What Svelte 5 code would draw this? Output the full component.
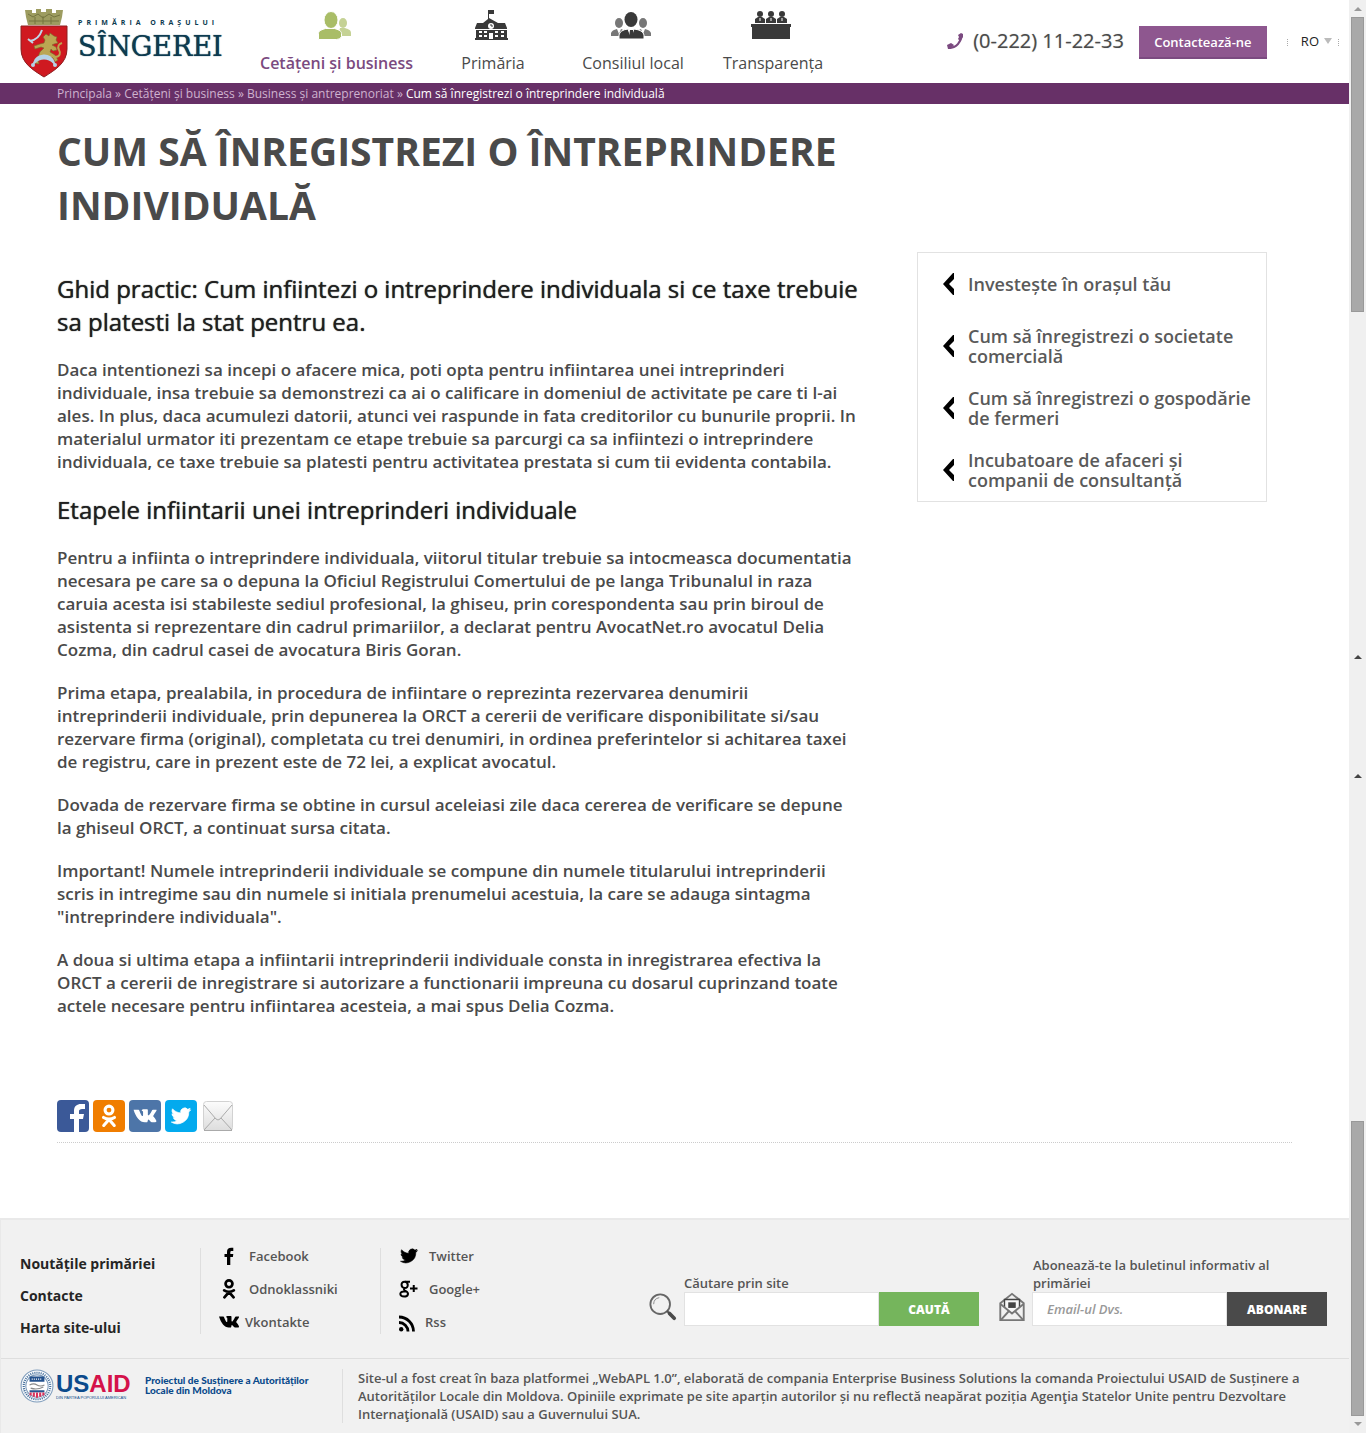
<script>
  const nav = [
    { label: 'Cetățeni și business', icon: 'people', active: true },
    { label: 'Primăria', icon: 'hall' },
    { label: 'Consiliul local', icon: 'council' },
    { label: 'Transparența', icon: 'panel' }
  ];
  const crumbs = ['Principala', 'Cetățeni și business', 'Business și antreprenoriat'];
  const related = [
    'Investește în orașul tău',
    'Cum să înregistrezi o societate comercială',
    'Cum să înregistrezi o gospodărie de fermeri',
    'Incubatoare de afaceri și companii de consultanță'
  ];
  const steps = [
    'Pentru a infiinta o intreprindere individuala, viitorul titular trebuie sa intocmeasca documentatia necesara pe care sa o depuna la Oficiul Registrului Comertului de pe langa Tribunalul in raza caruia acesta isi stabileste sediul profesional, la ghiseu, prin corespondenta sau prin biroul de asistenta si reprezentare din cadrul primariilor, a declarat pentru AvocatNet.ro avocatul Delia Cozma, din cadrul casei de avocatura Biris Goran.',
    'Prima etapa, prealabila, in procedura de infiintare o reprezinta rezervarea denumirii intreprinderii individuale, prin depunerea la ORCT a cererii de verificare disponibilitate si/sau rezervare firma (original), completata cu trei denumiri, in ordinea preferintelor si achitarea taxei de registru, care in prezent este de 72 lei, a explicat avocatul.',
    'Dovada de rezervare firma se obtine in cursul aceleiasi zile daca cererea de verificare se depune la ghiseul ORCT, a continuat sursa citata.',
    'Important! Numele intreprinderii individuale se compune din numele titularului intreprinderii scris in intregime sau din numele si initiala prenumelui acestuia, la care se adauga sintagma "intreprindere individuala".',
    'A doua si ultima etapa a infiintarii intreprinderii individuale consta in inregistrarea efectiva la ORCT a cererii de inregistrare si autorizare a functionarii impreuna cu dosarul cuprinzand toate actele necesare pentru infiintarea acesteia, a mai spus Delia Cozma.'
  ];
  const shares = ['facebook', 'odnoklassniki', 'vkontakte', 'twitter', 'mail'];
  const socials = [
    [['facebook', 'Facebook'], ['odnoklassniki', 'Odnoklassniki'], ['vkontakte', 'Vkontakte']],
    [['twitter', 'Twitter'], ['google', 'Google+'], ['rss', 'Rss']]
  ];
  let query = $state('');
  let email = $state('');
</script>

{#snippet glyph(name)}
  {#if name === 'facebook'}
    <path d="M8 19v-8H5.500V8H8V6c0-2.800 1.500-4.200 4.300-4.200h2V5h-1.600C11.500 5 11.300 5.600 11.300 6.500V8h3l-.4 3h-2.600v8z" />
  {:else if name === 'odnoklassniki'}
    <path fill-rule="evenodd" d="M10 0a4.800 4.800 0 1 1 0 9.600A4.800 4.800 0 0 1 10 0zm0 2.700a2.100 2.100 0 1 0 0 4.200 2.100 2.100 0 0 0 0-4.200z" />
    <path d="M5.200 11.300Q10 14.200 14.800 11.300M10 13l-4.600 5.300M10 13l4.600 5.300" fill="none" stroke="currentColor" stroke-width="2.700" stroke-linecap="round" />
  {:else if name === 'vkontakte'}
    <path d="M0 4.500h4.200c.5 0 .7.300.9.800.6 1.700 2 4.800 2.700 4.800.4 0 .5-.4.500-1.500V6.500c0-1.200-1.200-.9-1.200-1.400C7.200 4.300 8 4 9.200 4h2.300c.8 0 1 .4 1 1.200v3.600c0 .8.6.9 1.300.1 1-1.200 1.700-2.500 2.200-3.600.2-.5.5-.8 1-.8h2.700c.6 0 .5.500.2 1.100-.7 1.400-2.700 3.800-2.700 4.400 0 .7 3 3.200 2.800 4.700-.1.800-.9.800-1.500.8h-2.600c-1.300 0-2-2.400-3-2.400-.6 0-.3 2-1 2.300-.4.200-1.100.1-2.100.1C5.500 15.500 2 11 0 4.500z" />
  {:else if name === 'twitter'}
    <path d="M18.500 4.600c-.6.300-1.300.5-2 .6.700-.4 1.200-1.100 1.500-1.900-.7.400-1.400.7-2.200.8A3.500 3.500 0 0 0 9.800 7.300C6.900 7.200 4.300 5.800 2.600 3.700c-.9 1.600-.5 3.600 1.100 4.700-.6 0-1.100-.2-1.600-.4 0 1.700 1.200 3.100 2.800 3.400-.5.200-1 .2-1.600.1.500 1.400 1.700 2.400 3.300 2.400A7 7 0 0 1 1.500 15.300 10 10 0 0 0 16.800 6.400c.7-.5 1.300-1.100 1.700-1.800z" stroke="currentColor" stroke-width=".6" />
  {:else if name === 'google'}
    <path d="M6 2.700H11M5.500 2.700C1.500 2.700 1.500 9 5.800 9S9.500 2.700 5.500 2.700zM6 9c-2 1.200-1 2 .8 3 3.800 2.200 2.200 5.500-1.600 5.500-5 0-5.200-5-.4-5H7" fill="none" stroke="currentColor" stroke-width="2" />
    <path d="M11 9.500h7.500M14.750 6v7" fill="none" stroke="currentColor" stroke-width="2" />
  {:else if name === 'rss'}
    <circle cx="2.200" cy="17.300" r="2.200" />
    <path d="M0 10.500a9 9 0 0 1 9 9M0 5A14.500 14.500 0 0 1 14.500 19.500" fill="none" stroke="currentColor" stroke-width="2.800" />
  {/if}
{/snippet}

<div class="window">
  <div class="page">
    <header>
      <a class="brand" href="#top" aria-label="Primăria orașului Sîngerei">
        <svg class="crest" viewBox="0 0 48 70" aria-hidden="true">
          <path d="M5 2h7v3h4V1h5v3h5V1h6v4h4V2h7l-1 7-2 8H8L6 9z" fill="#9d9c60" />
          <path d="M8 6l5 3 5-3 5 4 6-4 5 3 6-2M9 13h30M15 9v7M23 8v8M31 9v7" stroke="#74753e" fill="none" />
          <path d="M1 18h46v23c0 14-12 21-23 28C13 62 1 55 1 41z" fill="#cf1920" stroke="#8d2021" />
          <path d="M26 26l3 2 1-3 4 3 3 1-1 3 2 3-4 1-2 1 4 2 1 3-4 1-2-2-1 3 5 3 3 5-3 2-2-4-6-2-5 3-4 1 1 4-5-1 1-4 3-2 2-5 4-4-3-1-6 2-1-3 6-2 4-1 1-3-2-3z" fill="#bba652" stroke="#776c2d" stroke-width=".6" />
          <path d="M35 49c5 0 6-4 4-7-2-4 0-6 3-7" fill="none" stroke="#bba652" stroke-width="2" />
          <path d="M10 33c6-1 10-5 12-11M8 31l5 4" fill="none" stroke="#bfd8e8" stroke-width="2" />
          <path d="M14 55c2-9 17-11 20 0-6-6-14-6-20 0z" fill="#b6d2e5" stroke="#b6d2e5" stroke-width="2" />
          <circle cx="13" cy="57" r="2" fill="#b6d2e5" /><circle cx="35" cy="57" r="2" fill="#b6d2e5" />
        </svg>
        <span class="brand-text"><small>PRIMĂRIA ORAȘULUI</small><strong>SÎNGEREI</strong></span>
      </a>

      <nav>
        {#each nav as item}
          <a href="#{item.icon}" class:active={item.active}>
            <svg viewBox="0 0 44 32" aria-hidden="true">
              {#if item.icon === 'people'}
                <g fill="#c5d295"><ellipse cx="31" cy="13" rx="4" ry="5" /><path d="M26 26h13v-3c0-3-3-4-6-5h-5z" /></g>
                <g fill="#a9bd67" stroke="#fff" stroke-width="1"><path d="M6.500 29.500v-6c0-3 4-4 7-5h9c3 1 7 2 7 5v3q-1 3-5 3z" /><ellipse cx="19" cy="10" rx="7" ry="8.500" /></g>
              {:else if item.icon === 'hall'}
                <g fill="#393939"><path d="M20 0h6v4h-5v4l9 5h7l2 5v1H7v-1l2-5h6l5-4zM8 20h31v10H8zM7 28h33v2H7z" /></g>
                <circle cx="23" cy="16" r="3" fill="#fff" /><path d="M23 14v2h2" stroke="#393939" fill="none" />
                <path d="M11 21h3v2h-3zM16 21h3v2h-3zM27 21h3v2h-3zM33 21h3v2h-3zM11 25h3v2h-3zM16 25h3v2h-3zM27 25h3v2h-3zM33 25h3v2h-3zM21 23h4v6h-4z" fill="#fff" />
              {:else if item.icon === 'council'}
                <g fill="#777"><ellipse cx="11" cy="13" rx="4" ry="5" /><ellipse cx="35" cy="13" rx="4" ry="5" /><path d="M3 26v-3q1-3 6-4l2 5 2-5q4 1 5 7zM29 26l2-6 2-1 2 5 2-5q5 1 6 4v3z" /></g>
                <g fill="#393939"><path d="M11 29v-4q1-5 9-6l3 8 3-8q9 1 10 6v4z" stroke="#fff" /><ellipse cx="23" cy="9.500" rx="6.500" ry="7.500" /><path d="M22 20h3l1 8h-5z" /></g>
              {:else}
                <g fill="#393939"><circle cx="12" cy="4" r="3" /><circle cx="23" cy="4" r="3" /><circle cx="34" cy="4" r="3" /><path d="M7 13V9l3-2h4l3 2v4zM18 13V9l3-2h4l3 2v4zM29 13V9l3-2h4l3 2v4zM3 14h40v3h-1v12H4V17H3z" /></g>
                <path d="M12 8v3M23 8v3M34 8v3" stroke="#fff" />
              {/if}
            </svg>
            <span>{item.label}</span>
          </a>
        {/each}
      </nav>

      <div class="contact">
        <svg class="phone" viewBox="0 0 16 16" aria-hidden="true"><path d="M1.500 14.500Q7 15.500 11 11t3.500-9.500" fill="none" stroke="#7b4a80" stroke-width="2" /><path d="M0 12l4-2 3 2-3 4H1zM11 2l3-2 2 1v3l-3 4-2-2 1-2z" fill="#7b4a80" /></svg>
        <a class="number" href="tel:0222112233">(0-222) 11-22-33</a>
        <button class="cta" type="button">Contactează-ne</button>
        <button class="lang" type="button">RO <i></i></button>
      </div>
    </header>

    <div class="crumbs">
      {#each crumbs as c}<a href="#{c}">{c}</a>{' » '}{/each}<b>Cum să înregistrezi o întreprindere individuală</b>
    </div>

    <main>
      <h1>Cum să înregistrezi o întreprindere individuală</h1>
      <article>
        <h2>Ghid practic: Cum infiintezi o intreprindere individuala si ce taxe trebuie sa platesti la stat pentru ea.</h2>
        <p>Daca intentionezi sa incepi o afacere mica, poti opta pentru infiintarea unei intreprinderi individuale, insa trebuie sa demonstrezi ca ai o calificare in domeniul de activitate pe care ti l-ai ales. In plus, daca acumulezi datorii, atunci vei raspunde in fata creditorilor cu bunurile proprii. In materialul urmator iti prezentam ce etape trebuie sa parcurgi ca sa infiintezi o intreprindere individuala, ce taxe trebuie sa platesti pentru activitatea prestata si cum tii evidenta contabila.</p>
        <h2>Etapele infiintarii unei intreprinderi individuale</h2>
        {#each steps as text}<p>{text}</p>{/each}
      </article>
      <aside>
        {#each related as text}
          <a href="#related">
            <svg viewBox="0 0 12 22" aria-hidden="true"><path d="M11 0v6L6 11l5 5v6h-1L0 11 10 0z" /></svg>
            <span>{text}</span>
          </a>
        {/each}
      </aside>
      <div class="share">
        {#each shares as s}
          <a class={s} href="#{s}" aria-label={s}>
            {#if s === 'mail'}
              <svg viewBox="0 0 32 32"><defs><linearGradient id="paper" x2="0" y2="1"><stop stop-color="#fcfcfc" /><stop offset="1" stop-color="#ddd" /></linearGradient></defs><rect x="1.500" y="1.500" width="29" height="29" rx="3" fill="url(#paper)" stroke="#d2d2d2" /><path d="M2 30l11-12M30 30L19 18M2 5l12 14q2 2 4 0L30 5M2 30.500h28" fill="none" stroke="#aaa" /></svg>
            {:else if s === 'facebook'}
              <svg viewBox="0 0 32 32"><path fill="currentColor" d="M17 32V19h-4v-5h4v-3c0-5 3-7 7-7h4v5h-3c-2 0-3 1-3 2v3h5l-1 5h-4v13z" /></svg>
            {:else}
              <svg viewBox="-4 -4 28 28" fill="currentColor">{@render glyph(s)}</svg>
            {/if}
          </a>
        {/each}
      </div>
    </main>

    <footer>
      <div class="top">
        <div class="links">
          <a href="#news">Noutățile primăriei</a>
          <a href="#contact">Contacte</a>
          <a href="#map">Harta site-ului</a>
        </div>
        {#each socials as group}
          <div class="social">
            {#each group as [icon, label]}
              <a href="#{icon}" class:tight={icon === 'vkontakte' || icon === 'rss'}><svg viewBox="0 0 20 20" fill="currentColor" aria-hidden="true">{@render glyph(icon)}</svg>{label}</a>
            {/each}
          </div>
        {/each}
        <form class="search" onsubmit={(e) => e.preventDefault()}>
          <svg viewBox="0 0 30 30" aria-hidden="true"><circle cx="12" cy="12" r="10.500" fill="none" stroke="#666" stroke-width="2" /><path d="M5 12q0-6 6-7" fill="none" stroke="#888" /><path d="M19 19l3 3" stroke="#555" stroke-width="2" /><path d="M22 22l5 5" stroke="#4a4a4a" stroke-width="4" stroke-linecap="round" /></svg>
          <label for="q">Căutare prin site</label>
          <div class="field"><input id="q" type="text" bind:value={query} /><button type="submit">CAUTĂ</button></div>
        </form>
        <form class="subscribe" onsubmit={(e) => e.preventDefault()}>
          <svg viewBox="0 0 28 32" aria-hidden="true"><path d="M1.500 12L14 2l12.500 10v18h-25z" fill="#f1f1f1" stroke="#777" stroke-width="2" /><path d="M6 8h16v8l-8 7-8-7z" fill="#f7f7f7" /><path d="M6 16V8h16v8" fill="none" stroke="#444" stroke-width="1.500" /><path d="M10 11h8v6h-8z" fill="#444" /><path d="M2 13l12 10 12-10M2 30l9-10M26 30l-9-10" fill="none" stroke="#777" stroke-width="2" /></svg>
          <label for="mail">Abonează-te la buletinul informativ al primăriei</label>
          <div class="field"><input id="mail" type="email" placeholder="Email-ul Dvs." bind:value={email} /><button type="submit">ABONARE</button></div>
        </form>
      </div>
      <div class="bottom">
        <a class="usaid" href="#usaid">
          <svg viewBox="0 0 32 32" aria-hidden="true"><circle cx="16" cy="16" r="15" fill="#f8fafc" stroke="#7f9cbb" /><circle cx="16" cy="16" r="12.500" fill="none" stroke="#46709d" stroke-width="2" stroke-dasharray="1 1" /><circle cx="16" cy="16" r="10.500" fill="#fff" stroke="#7f9cbb" /><path d="M9 7h14v5H9z" fill="#24528e" /><path d="M11 9.500h10" stroke="#fff" stroke-dasharray="1 1" /><path d="M9 15q4-2 7 0t7 0M10 18q6 2 12-1" stroke="#888" fill="none" /><path d="M9 20h14v2H9z" fill="#24528e" /><path d="M10 22v3M13 22v4M16 22v5M19 22v4M22 22v3" stroke="#d9315a" stroke-width="2" /></svg>
          <span class="mark"><strong>US<em>AID</em></strong><small>DIN PARTEA POPORULUI AMERICAN</small></span>
          <span class="project">Proiectul de Susținere a Autorităților<br />Locale din Moldova</span>
        </a>
        <p>Site-ul a fost creat în baza platformei „WebAPL 1.0”, elaborată de compania Enterprise Business Solutions la comanda Proiectului USAID de Susținere a Autorităților Locale din Moldova. Opiniile exprimate pe site aparțin autorilor și nu reflectă neapărat poziția Agenţia Statelor Unite pentru Dezvoltare Internaţională (USAID) sau a Guvernului SUA.</p>
      </div>
    </footer>
  </div>

  <div class="scroll" aria-hidden="true">
    <i class="arrow pale"></i><i class="thumb"></i>
    <span><i class="arrow"></i><i class="arrow"></i></span>
    <i class="thumb"></i><i class="arrow pale down"></i>
  </div>
</div>

<style>
  :global(body) { margin: 0; background: #fff; }
  .window { display: grid; grid-template-columns: minmax(0, 1fr) 17px; min-height: 100vh; font-family: "Open Sans", sans-serif; color: #4a4a4a; }
  .window :global(*) { box-sizing: border-box; }
  .page { display: flex; flex-direction: column; }
  a { color: inherit; text-decoration: none; }
  button, input { font-family: inherit; border: 0; border-radius: 0; margin: 0; }
  svg { display: block; flex: none; }

  header { display: flex; height: 83px; padding-left: 20px; }
  .brand { display: flex; align-items: flex-start; gap: 10px; width: 230px; padding-top: 8px; color: #0d3b50; }
  .crest { width: 48px; height: 70px; }
  .brand-text { display: flex; flex-direction: column; padding-top: 10px; white-space: nowrap; }
  .brand-text small { font: 700 7px/10px "Open Sans", sans-serif; letter-spacing: 4px; }
  .brand-text strong { font: 400 27px/38px "DejaVu Serif", serif; text-shadow: 0 0 1px currentColor; }
  nav { display: flex; }
  nav a { display: flex; flex-direction: column; align-items: center; min-width: 140px; padding: 10px 10px 0; font-size: 16px; line-height: 22px; }
  nav svg { width: 44px; height: 32px; margin: 0 6px 10px 0; }
  nav .active { font-weight: 600; color: #7b4a80; }
  .contact { display: flex; flex: 1; justify-content: flex-end; padding: 26px 10px 0 0; }
  .phone { width: 16px; height: 16px; margin: 7px 10px 0 0; }
  .number { font-size: 20px; line-height: 30px; margin-right: 15px; text-shadow: 0 0 1px #aaa; }
  .cta { width: 128px; height: 33px; padding: 0; margin-right: 20px; background: #8e578f; border-bottom: 2px solid #7b4a80; color: #fff; font-size: 13px; font-weight: 600; }
  .lang { display: flex; align-items: center; gap: 5px; height: 30px; padding: 0 7px 0 14px; background: repeating-linear-gradient(#aaa 0 1px, #fff 1px 2px) left 13px / 1px 7px no-repeat, repeating-linear-gradient(#aaa 0 1px, #fff 1px 2px) right 13px / 1px 7px no-repeat; color: #222; font-size: 13px; }
  .lang i { border: 4px solid transparent; border-top: 6px solid #bbb; border-bottom: 0; }

  .crumbs { background: #673067; color: #cfb3cf; height: 21px; padding: 0 57px; font-size: 12px; line-height: 21px; }
  .crumbs b { color: #fff; font-weight: 400; }

  main { display: grid; grid-template-columns: minmax(0, 1fr) 350px 25px; margin: 0 57px; padding-top: 20px; align-items: start; }
  h1 { margin: 0 0 20px; grid-column: 1; font-size: 39px; line-height: 54px; font-weight: 700; text-transform: uppercase; }
  article { grid-column: 1; padding: 0 56px 63px 0; }
  h2 { margin: 20px 0; font-size: 24px; line-height: 33px; font-weight: 400; color: #1f1f1f; text-shadow: 0 0 1px currentColor; }
  article p { margin: 0 0 20px; font-size: 17px; line-height: 23px; font-weight: 600; }
  aside { border: 1px solid #e2e2e2; color: #5a5a5a; }
  aside a { display: flex; align-items: center; gap: 13px; min-height: 62px; padding: 0 10px 0 25px; font-size: 18px; line-height: 20px; font-weight: 600; }
  aside svg { width: 12px; height: 22px; fill: #000; }
  .share { grid-column: 1 / -1; display: flex; gap: 4px; padding-bottom: 10px; border-bottom: 1px dotted #ccc; }
  .share a { width: 32px; height: 32px; border-radius: 4px; overflow: hidden; color: #fff; }
  .facebook { background: #3b5998; }
  .odnoklassniki { background: #f07d00; }
  .vkontakte { background: #4d75a8; }
  .twitter { background: #03aaee; }
  .share .mail { margin-left: 1px; }

  footer { margin-top: 75px; background: #f1f1f1; border: solid #e9e9e9; border-width: 2px 0 0 1px; font-size: 13px; font-weight: 600; color: #555; }
  .top { display: flex; height: 138px; padding: 28px 22px 0 19px; }
  .links { display: flex; flex-direction: column; width: 180px; font-size: 14px; line-height: 32px; font-weight: 700; color: #252525; }
  .social { width: 180px; height: 86px; border-left: 1px solid #dedede; padding-left: 18px; }
  .social a { display: flex; align-items: center; gap: 10px; height: 16px; margin-bottom: 17px; }
  .social .tight { gap: 6px; }
  .social svg { width: 20px; height: 20px; color: #000; }
  form { display: grid; grid-template-columns: 35px 295px; grid-template-rows: 44px 34px; }
  form svg { grid-row: 2; width: 28px; height: 30px; }
  form label { grid-area: 1 / 2; align-self: end; line-height: 18px; }
  .search { margin-left: auto; margin-right: 19px; }
  .subscribe { grid-template-columns: 34px 295px; }
  .subscribe label { padding: 0 20px 0 1px; }
  .field { grid-area: 2 / 2; display: flex; }
  input { flex: 1; min-width: 0; height: 34px; padding: 0 14px; background: #fff; border: 1px solid #e2e2e2; font-size: 13px; }
  input::placeholder { color: #999; font-style: italic; font-weight: 600; opacity: 1; }
  .field button { width: 100px; height: 34px; padding: 0; background: #75b55c; color: #fff; font-size: 12px; font-weight: 800; }
  .subscribe .field button { background: #4a4a4a; }
  .bottom { display: flex; border-top: 1px solid #dedede; padding: 10px 22px 10px 19px; }
  .usaid { display: flex; flex: none; width: 322px; color: #0b4a8b; }
  .usaid svg { width: 34px; height: 34px; }
  .mark { display: flex; flex-direction: column; width: 76px; margin: 4px 13px 0 2px; white-space: nowrap; }
  .mark strong { font: 700 24px/22px "Liberation Sans", sans-serif; }
  .mark em { font-style: normal; color: #d4124a; }
  .mark small { font: 400 4px/6px "Liberation Sans", sans-serif; }
  .project { font: 900 10px/10px Lato, sans-serif; margin-top: 6px; white-space: nowrap; }
  .bottom p { margin: 0; border-left: 1px solid #dedede; padding-left: 15px; line-height: 18px; }

  .scroll { display: flex; flex-direction: column; align-items: center; background: #f0f0f0; padding: 7px 0; }
  .scroll span { flex: 1; display: flex; flex-direction: column; justify-content: center; gap: 115px; }
  .thumb { width: 13px; height: 295px; background: #a9a9a9; border: 1px solid #999; margin: 6px 0; }
  .arrow { border: 4px solid transparent; border-bottom: 4px solid #444; border-top: 0; }
  .pale { border-bottom-color: #999; }
  .down { transform: rotate(180deg); }
</style>
